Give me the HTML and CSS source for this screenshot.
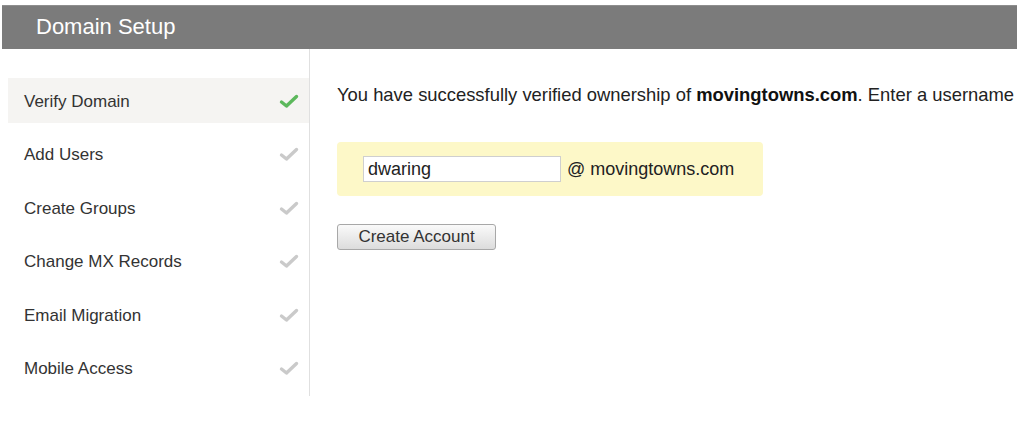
FILE: index.html
```html
<!DOCTYPE html>
<html>
<head>
<meta charset="utf-8">
<link rel="stylesheet" href="styles.css">
</head>
<body>
<header class="topbar"><h1 class="title">Domain Setup</h1></header>
<div class="layout">
  <nav class="sidebar">
    <div class="step active"><span>Verify Domain</span><svg class="check" viewBox="0 0 20 16"><path d="M2.5 9 L7.5 13 L17.5 3.5" fill="none" stroke="#5cb85c" stroke-width="3.4" stroke-linecap="round" stroke-linejoin="round"/></svg></div>
    <div class="step"><span>Add Users</span><svg class="check" viewBox="0 0 20 16"><path d="M2.5 9 L7.5 13 L17.5 3.5" fill="none" stroke="#cacaca" stroke-width="3.4" stroke-linecap="round" stroke-linejoin="round"/></svg></div>
    <div class="step"><span>Create Groups</span><svg class="check" viewBox="0 0 20 16"><path d="M2.5 9 L7.5 13 L17.5 3.5" fill="none" stroke="#cacaca" stroke-width="3.4" stroke-linecap="round" stroke-linejoin="round"/></svg></div>
    <div class="step"><span>Change MX Records</span><svg class="check" viewBox="0 0 20 16"><path d="M2.5 9 L7.5 13 L17.5 3.5" fill="none" stroke="#cacaca" stroke-width="3.4" stroke-linecap="round" stroke-linejoin="round"/></svg></div>
    <div class="step"><span>Email Migration</span><svg class="check" viewBox="0 0 20 16"><path d="M2.5 9 L7.5 13 L17.5 3.5" fill="none" stroke="#cacaca" stroke-width="3.4" stroke-linecap="round" stroke-linejoin="round"/></svg></div>
    <div class="step"><span>Mobile Access</span><svg class="check" viewBox="0 0 20 16"><path d="M2.5 9 L7.5 13 L17.5 3.5" fill="none" stroke="#cacaca" stroke-width="3.4" stroke-linecap="round" stroke-linejoin="round"/></svg></div>
  </nav>
  <main class="content">
    <p class="intro">You have successfully verified ownership of <b>movingtowns.com</b>. Enter a username</p>
    <div class="userbox">
      <input class="username" type="text" value="dwaring">
      <span class="domain">@ movingtowns.com</span>
    </div>
    <button class="create">Create Account</button>
  </main>
</div>
</body>
</html>
```
FILE: styles.css
```css
html, body {
  margin: 0;
  background: #fff;
  overflow: hidden;
}
body {
  padding: 5px 7px 0 2px;
  font-family: "Liberation Sans", Arial, sans-serif;
  color: #333;
}
.topbar {
  height: 44px;
  background: #7b7b7b;
  border-top: 1px solid #8e8e8e;
  box-sizing: border-box;
  display: flex;
  align-items: center;
  padding-left: 34px;
}
.title {
  margin: 0;
  font-weight: normal;
  font-size: 22px;
  color: #fff;
  position: relative;
  top: -1px;
}
.layout {
  display: flex;
}
.sidebar {
  width: 301px;
  margin-left: 6px;
  padding: 29px 0 0;
  height: 318px;
  border-right: 1px solid #e0e0e0;
  display: flex;
  flex-direction: column;
  gap: 8.6px;
}
.step {
  height: 45px;
  display: flex;
  align-items: center;
  justify-content: space-between;
  padding: 0 10px 0 16px;
  font-size: 17px;
  color: #333;
}
.step span {
  position: relative;
  top: 1px;
}
.step.active {
  background: #f5f4f2;
}
.check {
  width: 20px;
  height: 16px;
}
.content {
  padding: 35px 0 0 27px;
  flex: 1;
  min-width: 0;
}
.intro {
  margin: 0;
  font-size: 18.4px;
  white-space: nowrap;
  color: #222;
}
.intro b {
  color: #111;
}
.userbox {
  margin-top: 36px;
  width: 400px;
  height: 54px;
  background: #fdf8c8;
  border-radius: 4px;
  display: flex;
  align-items: center;
  padding-left: 26px;
  gap: 6px;
}
.username {
  width: 198px;
  height: 26px;
  box-sizing: border-box;
  border: 1px solid #cfcfcf;
  padding: 0 4px;
  font-family: "Liberation Sans", Arial, sans-serif;
  font-size: 18px;
  color: #222;
  background: #fff;
  outline: none;
}
.domain {
  font-size: 18px;
  color: #222;
}
.create {
  display: block;
  margin-top: 28px;
  width: 159px;
  height: 26px;
  border: 1px solid #a8a8a8;
  border-radius: 3px;
  background: linear-gradient(#fafafa, #dcdcdc);
  font-family: "Liberation Sans", Arial, sans-serif;
  font-size: 17px;
  color: #333;
  padding: 0;
}
```
